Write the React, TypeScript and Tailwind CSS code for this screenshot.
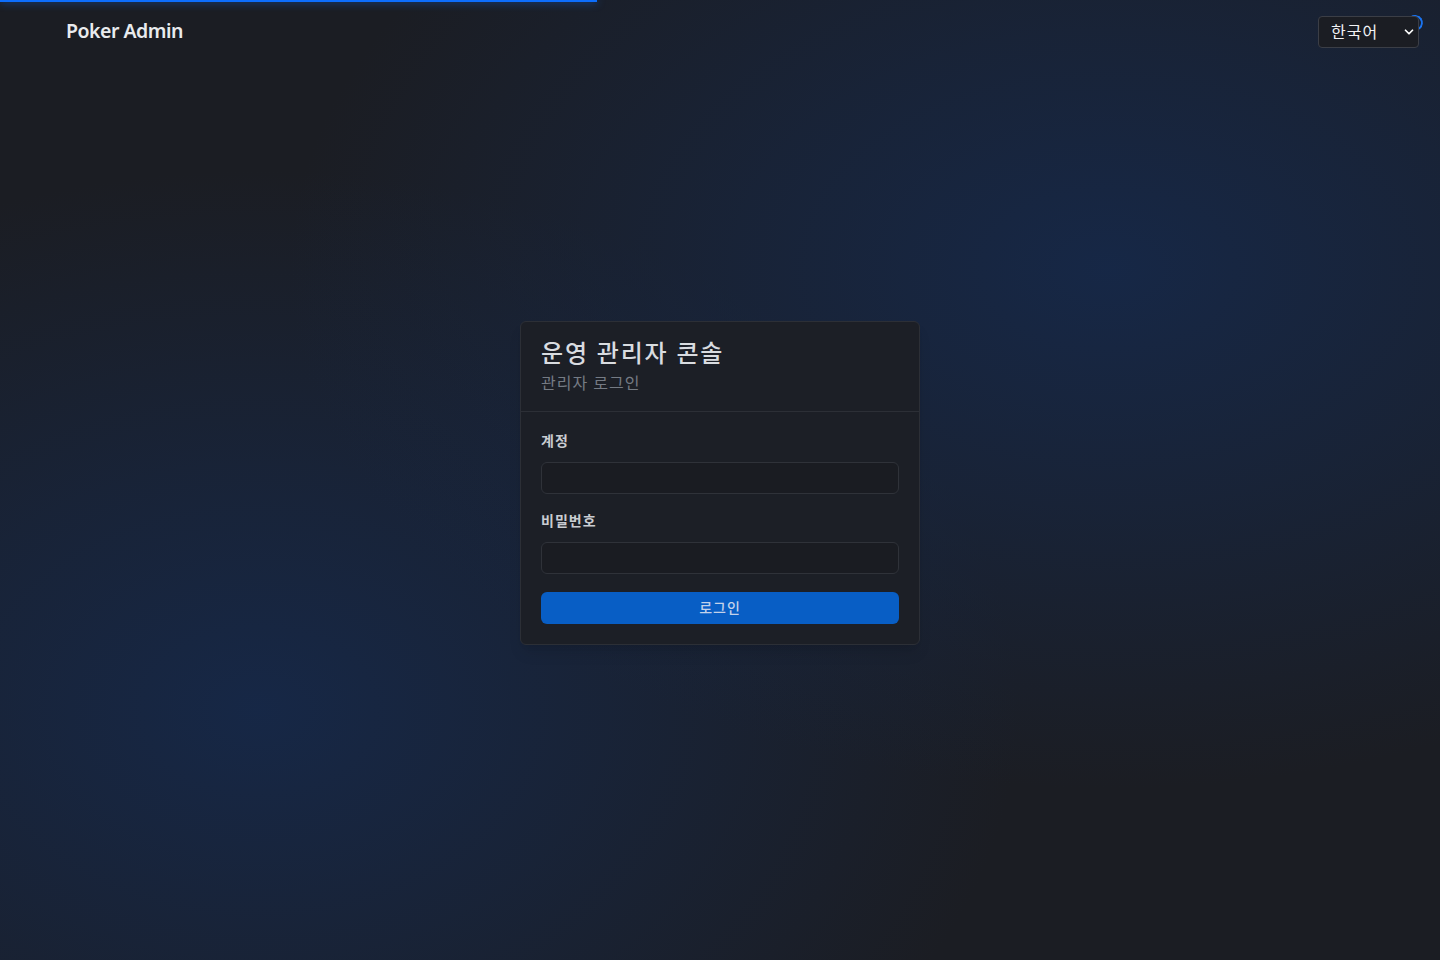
import { ChevronDown } from 'lucide-react';

export default function App() {
  return (
    <div
      className="relative flex min-h-screen flex-col overflow-hidden bg-[#1b1d23] bg-[radial-gradient(ellipse_820px_520px_at_77%_28%,rgba(22,40,72,0.95),rgba(22,40,72,0.55)_45%,rgba(22,40,72,0)_100%),radial-gradient(ellipse_760px_540px_at_18%_74%,rgba(22,40,72,0.95),rgba(22,40,72,0.55)_45%,rgba(22,40,72,0)_100%)]"
      style={{ fontFamily: '"Noto Sans", "Noto Sans CJK KR", sans-serif' }}
    >
      {/* progress bar */}
      <div className="absolute left-0 top-0 h-[2px] w-[597px] bg-[#0d6efd] shadow-[0_0_8px_#0d6efd]" />
      <div className="absolute right-[17px] top-[15px] h-[16px] w-[16px] rotate-[10deg] rounded-full border-2 border-transparent border-r-[#1a73f0] border-t-[#1a73f0]" />

      {/* Header */}
      <header className="flex h-16 items-center justify-between pl-[66px] pr-[21px]">
        <span className="-mt-[2px] text-[19.5px] font-semibold tracking-tight text-[#e9ebee]">Poker Admin</span>
        <div className="relative">
          <select className="h-8 w-[101px] appearance-none rounded border border-[#3b3e46] bg-[#1b1d23] pl-3 text-[16px] tracking-[1px] text-[#f1f2f4] outline-none">
            <option>한국어</option>
          </select>
          <ChevronDown size={14} strokeWidth={3} className="pointer-events-none absolute right-[3px] top-[9px] text-white" />
        </div>
      </header>

      {/* Login */}
      <main className="flex flex-1 items-center justify-center pb-[59px]">
        <div className="w-[400px] rounded-md border border-[#2c2f36] bg-[#1c1f26] shadow-lg">
          <div className="border-b border-[#2c2f36] px-5 pb-4 pt-4">
            <h1 className="text-[24px] leading-[29px] font-medium tracking-[1.8px] text-[#d9dce0]">운영 관리자 콘솔</h1>
            <p className="mt-1 text-[16px] leading-6 tracking-[1px] text-[#757b84]">관리자 로그인</p>
          </div>
          <form className="px-5 pb-5 pt-[19px]">
            <label className="block text-[14px] leading-5 font-semibold tracking-[1px] text-[#c9ccd1]">계정</label>
            <input
              type="text"
              className="mt-[11px] block h-8 w-full rounded-md border border-[#2f3239] bg-[#1a1c22] px-3 text-sm text-white outline-none"
            />
            <label className="mt-[17px] block text-[14px] leading-5 font-semibold tracking-[1px] text-[#c9ccd1]">비밀번호</label>
            <input
              type="password"
              className="mt-[11px] block h-8 w-full rounded-md border border-[#2f3239] bg-[#1a1c22] px-3 text-sm text-white outline-none"
            />
            <button
              type="button"
              className="mt-[18px] flex h-8 w-full items-center justify-center rounded-md bg-[#085ec5] text-[14px] font-medium tracking-[1px] text-[#c3d2ea]"
            >
              로그인
            </button>
          </form>
        </div>
      </main>
    </div>
  );
}
